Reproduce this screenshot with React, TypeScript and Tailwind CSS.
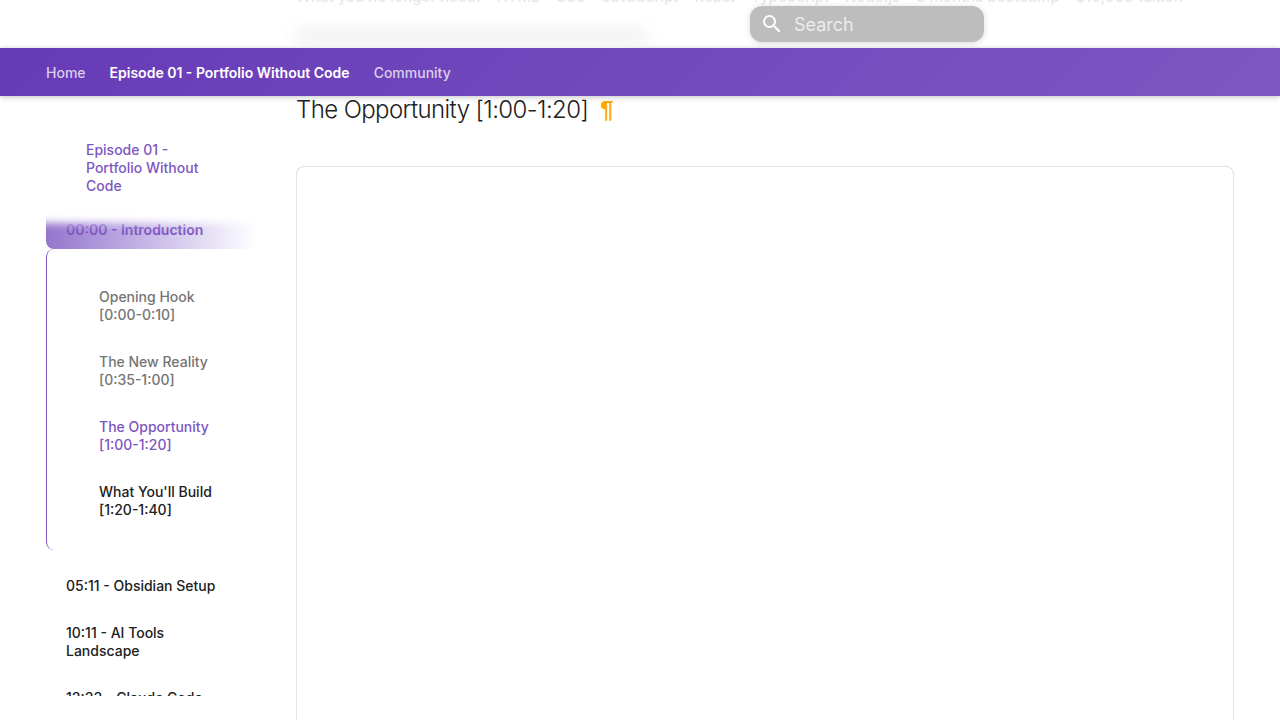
import React from "react";

const tabs = [
  { label: "Home", active: false },
  { label: "Episode 01 - Portfolio Without Code", active: true },
  { label: "Community", active: false },
];

const sections = [
  { title: "Opening Hook", time: "[0:00-0:10]", color: "text-[#757575]" },
  { title: "The New Reality", time: "[0:35-1:00]", color: "text-[#757575]" },
  { title: "The Opportunity", time: "[1:00-1:20]", color: "text-[#7e56c2]" },
  { title: "What You'll Build", time: "[1:20-1:40]", color: "text-[#212121]" },
];

function Header() {
  return (
    <header className="relative z-20">
      <div className="relative h-12 overflow-hidden px-4 sm:px-[46px]">
        <div className="pl-[250px] text-[#e8e8e8]">
          <p className="-mt-[15px] text-[15px] leading-6 font-medium whitespace-nowrap">
            What you no longer need: • HTML • CSS • JavaScript • React • TypeScript • Node.js • 6 months bootcamp • $10,000 tuition
          </p>
          <div className="mt-5 h-4 w-[350px] bg-[#f1f1f1] blur-[8px]" />
        </div>
        <label className="absolute top-[6px] left-[750px] flex h-9 w-[234px] items-center rounded-xl bg-[#bdbdbd] pl-[10px] shadow-[0_1px_6px_rgba(0,0,0,0.15)]">
          <svg viewBox="0 0 24 24" className="size-6 shrink-0 fill-white" aria-hidden="true">
            <path d="M9.5 3A6.5 6.5 0 0 1 16 9.5c0 1.61-.59 3.09-1.56 4.23l.27.27h.79l5 5-1.5 1.5-5-5v-.79l-.27-.27A6.52 6.52 0 0 1 9.5 16 6.5 6.5 0 0 1 3 9.5 6.5 6.5 0 0 1 9.5 3m0 2C7 5 5 7 5 9.5S7 14 9.5 14 14 12 14 9.5 12 5 9.5 5" />
          </svg>
          <input
            type="text"
            aria-label="Search"
            placeholder="Search"
            className="ml-[10px] w-full min-w-0 bg-transparent pt-0.5 text-lg text-white outline-none placeholder:text-[#ececec]"
          />
        </label>
      </div>
      <nav className="flex h-12 items-center gap-6 bg-linear-135 from-[#673ab7] to-[#7e57c2] px-4 pt-px text-sm font-medium shadow-[0_0_4px_rgba(0,0,0,0.1),0_2px_6px_rgba(0,0,0,0.15)] sm:px-[46px]">
        {tabs.map((tab) => (
          <a key={tab.label} href="#" className={tab.active ? "font-semibold text-white" : "text-white/75"}>
            {tab.label}
          </a>
        ))}
      </nav>
    </header>
  );
}

function Sidebar() {
  return (
    <aside className="h-[600px] w-[210px] shrink-0 overflow-hidden text-sm leading-[18px] font-medium">
      <a href="#" className="relative z-10 block bg-white pt-[45px] pr-10 pb-4 pl-10 text-[#7e56c2] shadow-[0_4px_8px_8px_white]">
        Episode 01 - Portfolio Without Code
      </a>
      <a
        href="#"
        className="flex h-[38px] items-center rounded-bl-lg bg-linear-to-r from-[#9575cd] to-white px-5 font-semibold text-[#7e56c2]"
      >
        00:00 - Introduction
      </a>
      <ul className="flex h-[301px] flex-col gap-[29px] rounded-l-lg border-l border-[#7e56c2] pt-[39px] pl-[52px]">
        {sections.map((s) => (
          <li key={s.title}>
            <a href="#" className={s.color}>
              {s.title}
              <br />
              {s.time}
            </a>
          </li>
        ))}
      </ul>
      <ul className="flex flex-col gap-[29px] pt-[27px] pr-8 pl-5 text-[#212121]">
        <li className="whitespace-nowrap">
          <a href="#">05:11 - Obsidian Setup</a>
        </li>
        <li>
          <a href="#">10:11 - AI Tools Landscape</a>
        </li>
        <li className="whitespace-nowrap">
          <a href="#">13:33 - Claude Code</a>
        </li>
      </ul>
    </aside>
  );
}

export default function App() {
  return (
    <div className="flex h-screen flex-col overflow-hidden bg-white font-['Inter',sans-serif] text-[#212121]">
      <Header />
      <div className="flex min-h-0 grow px-4 sm:px-[46px]">
        <Sidebar />
        <main className="flex min-w-0 grow flex-col pl-10">
          <h2 className="-mt-1 flex h-9 items-center text-2xl font-light tracking-tight">
            The Opportunity [1:00-1:20]
            <a href="#" aria-label="Permanent link" className="ml-3 font-['Liberation_Sans',sans-serif] font-bold text-[#ffa800]">
              ¶
            </a>
          </h2>
          <div className="mt-[38px] grow rounded-t-lg border border-b-0 border-[#e1e1e6]" />
        </main>
      </div>
    </div>
  );
}
